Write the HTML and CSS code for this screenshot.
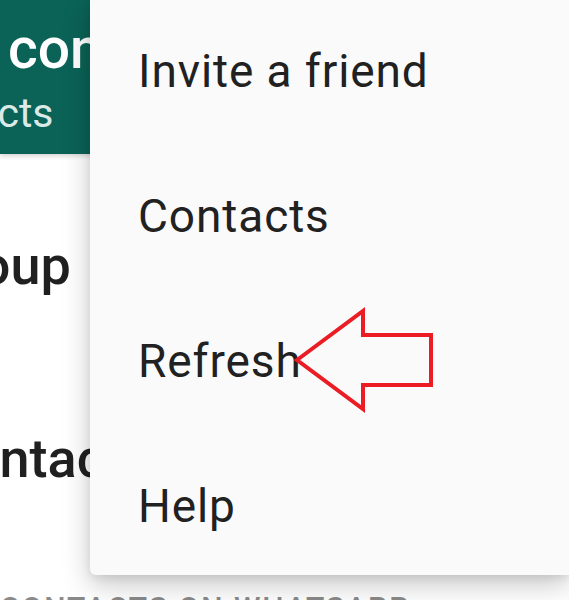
FILE: index.html
```html
<!DOCTYPE html>
<html lang="en">
<head>
<meta charset="utf-8">
<title>Select contact</title>
<link rel="stylesheet" href="styles.css">
</head>
<body>
<div class="screen">
  <header class="appbar">
    <div class="title">Select contact</div>
    <div class="subtitle">256 contacts</div>
  </header>
  <ul class="list">
    <li class="row row-group">New group</li>
    <li class="row row-contact">New contact</li>
  </ul>
  <div class="section-label">Contacts on WhatsApp</div>

  <div class="menu">
    <div class="menu-item">Invite a friend</div>
    <div class="menu-item">Contacts</div>
    <div class="menu-item">Refresh</div>
    <div class="menu-item">Help</div>
  </div>

  <svg class="arrow" width="146" height="110" viewBox="0 0 146 110" aria-hidden="true">
    <polygon points="7,55 73,6 73,30 141,30 141,80 73,80 73,104" fill="none" stroke="#ec1c24" stroke-width="4" stroke-linejoin="miter"/>
  </svg>
</div>
</body>
</html>
```

FILE: styles.css
```css
* {
  box-sizing: border-box;
}

html, body {
  margin: 0;
  padding: 0;
  background: #ffffff;
}

body {
  font-family: Roboto, "Liberation Sans", Arial, sans-serif;
}

.screen {
  position: relative;
  width: 569px;
  height: 600px;
  overflow: hidden;
  background: #ffffff;
}

.appbar {
  height: 154px;
  background: #0b6256;
  color: #ffffff;
  box-shadow: 0 2px 5px rgba(0, 0, 0, 0.18);
  white-space: nowrap;
  display: flex;
  flex-direction: column;
}

.title {
  font-size: 57px;
  font-weight: 500;
  line-height: 56px;
  padding-top: 21px;
  text-indent: -165px;
}

.subtitle {
  font-size: 41px;
  font-weight: 400;
  line-height: 42px;
  padding-top: 15px;
  color: #dbeae7;
  text-indent: -185px;
}

.list {
  list-style: none;
  margin: 0;
  padding: 15px 0 0 0;
}

.row {
  height: 193px;
  line-height: 193px;
  font-size: 54px;
  font-weight: 500;
  color: #202020;
  white-space: nowrap;
}

.row-group {
  text-indent: -190px;
}

.row-contact {
  text-indent: -180px;
}

.section-label {
  margin-top: 35px;
  font-size: 30px;
  line-height: 36px;
  font-weight: 500;
  color: #8a8a8a;
  text-transform: uppercase;
  letter-spacing: 2px;
  white-space: nowrap;
}

.menu {
  position: absolute;
  left: 90px;
  top: -1px;
  right: 0;
  background: #fafafa;
  border-bottom-left-radius: 6px;
  box-shadow: 0 10px 28px rgba(0, 0, 0, 0.22), 0 3px 8px rgba(0, 0, 0, 0.08);
}

.menu-item {
  height: 145px;
  line-height: 145px;
  padding-left: 48px;
  font-size: 46px;
  font-weight: 400;
  letter-spacing: 0.9px;
  color: #212121;
  white-space: nowrap;
}

.menu-item:last-child {
  height: 141px;
}

.arrow {
  position: absolute;
  left: 290px;
  top: 305px;
}
```
